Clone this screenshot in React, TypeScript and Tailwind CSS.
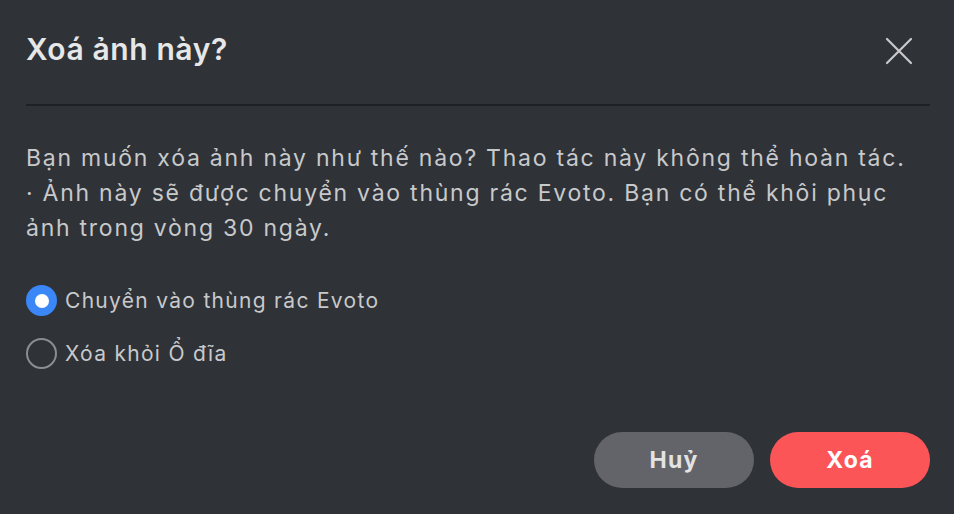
import React from "react";

export default function App() {
  return (
    <div
      className="w-[954px] h-[514px] bg-[#2f3237] flex flex-col pl-[26px] pr-[24px] overflow-hidden"
      style={{ fontFamily: "Inter, 'Noto Sans', sans-serif" }}
    >
      <div className="h-[104px] flex items-start justify-between pt-[31px]">
        <div className="text-[30px] leading-[36px] font-semibold tracking-[0.6px] text-[#e6e7e8]">Xoá ảnh này?</div>
        <button className="mt-[5px] mr-[16px] w-[30px] h-[30px] flex items-center justify-center">
          <svg width="30" height="30" viewBox="0 0 30 30" fill="none" stroke="#c9cacc" strokeWidth="2.2" strokeLinecap="round">
            <path d="M3 3 L27 27 M27 3 L3 27" />
          </svg>
        </button>
      </div>
      <div className="h-[2px] bg-[#1f2124]" />
      <div className="mt-[35px] text-[23px] leading-[35px] tracking-[1.75px] text-[#c8c9cb] whitespace-nowrap">
        <div>Bạn muốn xóa ảnh này như thế nào? Thao tác này không thể hoàn tác.</div>
        <div>· Ảnh này sẽ được chuyển vào thùng rác Evoto. Bạn có thể khôi phục</div>
        <div>ảnh trong vòng 30 ngày.</div>
      </div>
      <div className="mt-[39px] flex flex-col gap-[22px]">
        <label className="flex items-center gap-[8px] h-[31px]">
          <span className="w-[31px] h-[31px] rounded-full bg-[#3b87f7] flex items-center justify-center">
            <span className="w-[14px] h-[14px] rounded-full bg-white" />
          </span>
          <span className="text-[21px] tracking-[1.3px] text-[#c8c9cb]">Chuyển vào thùng rác Evoto</span>
        </label>
        <label className="flex items-center gap-[8px] h-[31px]">
          <span className="w-[31px] h-[31px] rounded-full border-2 border-[#8b8d91]" />
          <span className="text-[21px] tracking-[1.3px] text-[#c8c9cb]">Xóa khỏi Ổ đĩa</span>
        </label>
      </div>
      <div className="mt-auto mb-[26px] flex justify-end gap-[16px]">
        <button className="w-[160px] h-[56px] rounded-full bg-[#636469] text-[23px] font-bold tracking-[1.2px] text-[#e3e3e4]">Huỷ</button>
        <button className="w-[160px] h-[56px] rounded-full bg-[#fc5558] text-[23px] font-bold tracking-[1.2px] text-white">Xoá</button>
      </div>
    </div>
  );
}
